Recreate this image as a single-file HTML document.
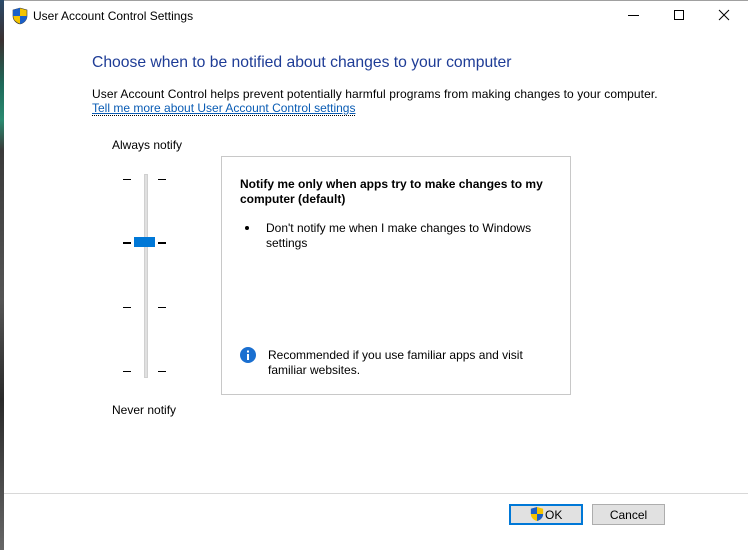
<!DOCTYPE html>
<html><head><meta charset="utf-8"><style>
*{margin:0;padding:0;box-sizing:border-box}
body{width:748px;height:550px;overflow:hidden;background:#fff;font-family:"Segoe UI","Liberation Sans",sans-serif;font-size:12px;color:#000;position:relative}
.a{position:absolute;white-space:nowrap}
.tick{position:absolute;width:8px;height:1px;background:#000}
</style></head><body>
<div class="a" style="left:0;top:0;width:4px;height:550px;background:linear-gradient(#2a4a6a 0,#3a3030 40px,#1e6a5a 85px,#2a8a70 120px,#3a3a3a 150px,#555 300px,#2a2a2a 400px,#666 550px)"></div>
<div class="a" style="left:4px;top:0;width:744px;height:1px;background:#a0a0a0"></div>
<svg class="a" style="left:12px;top:7px" width="16" height="18" viewBox="0 0 16 18"><path d="M8 1 L15 3 V9 C15 13 12 16 8 17 C4 16 1 13 1 9 V3 Z" fill="#f5c400" stroke="#333" stroke-width="0.6"/><path d="M8 1 V9 H1 V3 Z" fill="#1a5fc8"/><path d="M8 9 H15 C15 13 12 16 8 17 Z" fill="#1a5fc8"/></svg>
<div class="a" style="left:33px;top:9px;font-size:12px">User Account Control Settings</div>
<div class="a" style="left:628px;top:15px;width:11px;height:1px;background:#000"></div>
<div class="a" style="left:674px;top:10px;width:10px;height:10px;border:1px solid #000"></div>
<svg class="a" style="left:718px;top:9px" width="12" height="12"><path d="M1 1L11 11M11 1L1 11" stroke="#000" stroke-width="1"/></svg>
<div class="a" style="left:92px;top:54px;font-size:15.7px;color:#1e3c96">Choose when to be notified about changes to your computer</div>
<div class="a" style="left:92px;top:87px;letter-spacing:0.08px">User Account Control helps prevent potentially harmful programs from making changes to your computer.</div>
<div class="a" style="left:92px;top:101px;color:#0a5cb4;text-decoration:underline;border-bottom:1px dotted #000;line-height:14px">Tell me more about User Account Control settings</div>
<div class="a" style="left:112px;top:138px">Always notify</div>
<div class="a" style="left:144px;top:174px;width:4px;height:204px;background:#e0e0e0;border:1px solid #d0d0d0"></div>
<div class="tick" style="left:123px;top:179px"></div><div class="tick" style="left:158px;top:179px"></div>
<div class="tick" style="left:123px;top:242px;height:2px"></div><div class="tick" style="left:158px;top:242px;height:2px"></div>
<div class="tick" style="left:123px;top:307px"></div><div class="tick" style="left:158px;top:307px"></div>
<div class="tick" style="left:123px;top:371px"></div><div class="tick" style="left:158px;top:371px"></div>
<div class="a" style="left:134px;top:237px;width:21px;height:10px;background:#0078d7"></div>
<div class="a" style="left:221px;top:156px;width:350px;height:239px;border:1px solid #c8c8c8"></div>
<div class="a" style="left:240px;top:177px;font-weight:bold;line-height:14.5px">Notify me only when apps try to make changes to my<br>computer (default)</div>
<div class="a" style="left:245px;top:226px;width:4px;height:4px;border-radius:50%;background:#000"></div>
<div class="a" style="left:266px;top:221px;line-height:15px">Don't notify me when I make changes to Windows<br>settings</div>
<svg class="a" style="left:240px;top:347px" width="16" height="16"><circle cx="8" cy="8" r="8" fill="#1a6fd0"/><rect x="7" y="7" width="2" height="6" fill="#fff"/><rect x="7" y="3.5" width="2" height="2" fill="#fff"/></svg>
<div class="a" style="left:268px;top:348px;line-height:15px">Recommended if you use familiar apps and visit<br>familiar websites.</div>
<div class="a" style="left:112px;top:403px">Never notify</div>
<div class="a" style="left:4px;top:493px;width:744px;height:1px;background:#d8d8d8"></div>
<div class="a" style="left:509px;top:504px;width:74px;height:21px;background:#e1e1e1;border:2px solid #0078d7"></div>
<svg class="a" style="left:530px;top:506px" width="14" height="16" viewBox="0 0 16 18"><path d="M8 1 L15 3 V9 C15 13 12 16 8 17 C4 16 1 13 1 9 V3 Z" fill="#f5c400"/><path d="M8 1 V9 H1 V3 Z" fill="#1a5fc8"/><path d="M8 9 H15 C15 13 12 16 8 17 Z" fill="#1a5fc8"/></svg>
<div class="a" style="left:545px;top:508px">OK</div>
<div class="a" style="left:592px;top:504px;width:73px;height:21px;background:#e1e1e1;border:1px solid #adadad;text-align:center;line-height:20px">Cancel</div>
</body></html>
